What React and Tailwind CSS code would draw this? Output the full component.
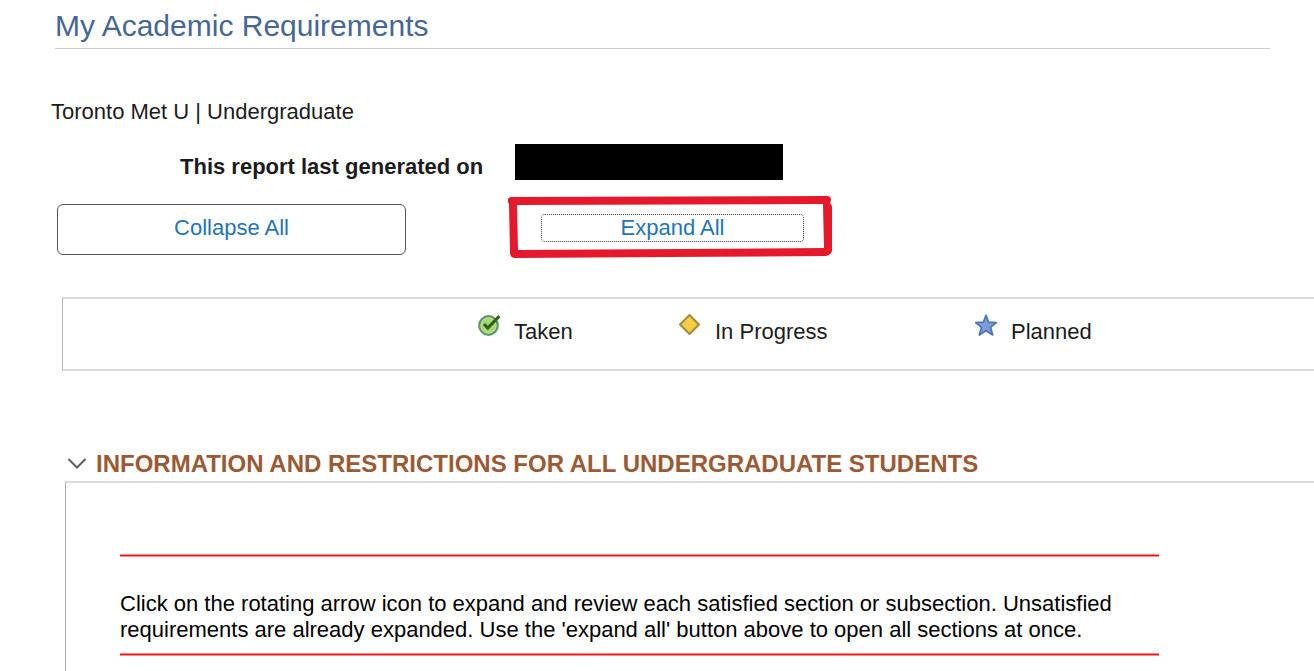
import { useState } from "react";

function TakenIcon() {
  return (
    <svg viewBox="0 0 22 22" className="w-[22px] h-[22px] shrink-0" aria-hidden="true">
      <circle cx="10.5" cy="11.5" r="9.3" fill="#a9d672" stroke="#5d9470" strokeWidth="2.2" />
      <circle cx="10.5" cy="11.5" r="7.6" fill="none" stroke="#c4e696" strokeWidth="0.8" />
      <path d="M6 10 L9.8 14 L21.4 2.2" fill="none" stroke="#2f6118" strokeWidth="3.2" />
    </svg>
  );
}

function InProgressIcon() {
  return (
    <svg viewBox="0 0 22 22" className="w-[22px] h-[22px] shrink-0" aria-hidden="true">
      <path d="M10.5 1 L20 10.5 L10.5 20 L1 10.5 Z" fill="#f4cf45" stroke="#a08a3c" strokeWidth="2" strokeLinejoin="round" />
    </svg>
  );
}

function PlannedIcon() {
  return (
    <svg viewBox="0 0 22 22" className="w-[22px] h-[22px] shrink-0" aria-hidden="true">
      <path
        d="M11 1.2 L13.7 8.2 L21.4 8.6 L15.6 13.4 L17.7 21 L11 16.8 L4.3 21 L6.4 13.4 L0.6 8.6 L8.3 8.2 Z"
        fill="#7b9bd9"
        stroke="#4d76ae"
        strokeWidth="1.7"
        strokeLinejoin="round"
      />
    </svg>
  );
}

// Hand-drawn marker box around the Expand All button
function MarkerFrame() {
  return (
    <svg viewBox="0 0 324 63" preserveAspectRatio="none" className="absolute inset-0 w-full h-full pointer-events-none" aria-hidden="true">
      <path
        fillRule="evenodd"
        fill="#e6182c"
        d="M3 1 L319 0 Q323 0 323 4 L322 7 L324 10 L324 55 Q323 59 318 60 L160 61 L6 62 Q2 61 2 57 L1 8 Q-1 5 0 3 Q1 1 3 1 Z M9 9 L10 54 L316 52 L315 8 Z"
      />
    </svg>
  );
}

const legend = [
  { label: "Taken", Icon: TakenIcon },
  { label: "In Progress", Icon: InProgressIcon },
  { label: "Planned", Icon: PlannedIcon },
];

export default function App() {
  const [isOpen, setIsOpen] = useState(true);

  return (
    <main className="min-h-screen flex flex-col overflow-x-hidden bg-white text-[#1c1c1c] text-[22px] leading-[26px] font-['Liberation_Sans',Arial,sans-serif]">
      <h1 className="ml-[55px] mr-11 pt-2 pb-1 border-b border-[#cfcfcf] text-[30px] leading-9 text-[#466794]">
        My Academic Requirements
      </h1>

      <p className="ml-[51px] mt-[50px]">Toronto Met U | Undergraduate</p>

      <div className="ml-[180px] mt-[19px] flex items-end gap-8">
        <span className="font-bold">This report last generated on</span>
        <span className="w-[268px] h-9 bg-black" />
      </div>

      <div className="ml-[57px] mt-4 flex items-end gap-[102px]">
        <button
          onClick={() => setIsOpen(false)}
          className="w-[349px] h-[51px] mb-1 pb-1 rounded-md border border-[#555555] text-[#1f75b8]"
        >
          Collapse All
        </button>
        <div className="relative w-[324px] h-[63px] pt-[18px] pl-[33px]">
          <button
            onClick={() => setIsOpen(true)}
            className="w-[263px] h-7 flex items-center justify-center rounded-sm border border-dotted border-[#444444] text-[#1f75b8]"
          >
            Expand All
          </button>
          <MarkerFrame />
        </div>
      </div>

      <ul className="ml-[62px] mt-[38px] h-[74px] pl-[415px] pt-[15px] grid grid-cols-[201px_296px_auto] border-y-2 border-l border-y-[#dedad8] border-l-[#b9b5b0]">
        {legend.map(({ label, Icon }) => (
          <li key={label} className="flex items-start gap-3.5">
            <Icon />
            <span className="pt-[5px]">{label}</span>
          </li>
        ))}
      </ul>

      <section className="mt-[79px] flex-1 flex flex-col">
        <h2 className="ml-[67px] text-2xl leading-7 font-bold text-[#9c5a34]">
          <button onClick={() => setIsOpen(!isOpen)} aria-expanded={isOpen} className="flex items-center gap-[9px]">
            <svg viewBox="0 0 20 12" className={`w-5 h-3 ${isOpen ? "" : "-rotate-90"}`} aria-hidden="true">
              <path d="M1.5 1 L10 9.5 L18.5 1" fill="none" stroke="#5c6062" strokeWidth="2" />
            </svg>
            INFORMATION AND RESTRICTIONS FOR ALL UNDERGRADUATE STUDENTS
          </button>
        </h2>

        {isOpen && (
          <div className="ml-[65px] mt-[3px] pl-[54px] pr-[155px] pt-[71px] flex-1 border-t-2 border-l border-t-[#dedad8] border-l-[#b3b3b3]">
            <hr className="h-[3px] border-y border-[#ff8a8a] bg-[#f01414]" />
            <p className="mt-[34px] mb-2.5 text-black">
              Click on the rotating arrow icon to expand and review each satisfied section or subsection. Unsatisfied
              requirements are already expanded. Use the 'expand all' button above to open all sections at once.
            </p>
            <hr className="h-[3px] border-y border-[#ff8a8a] bg-[#f01414]" />
          </div>
        )}
      </section>
    </main>
  );
}
